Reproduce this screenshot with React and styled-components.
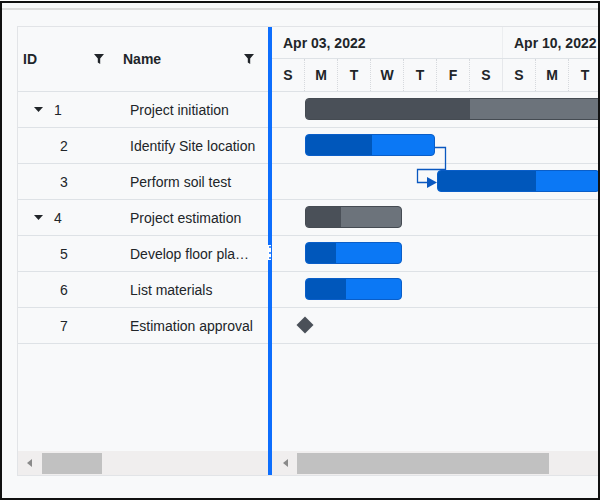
import styled, { createGlobalStyle } from "styled-components";

const GlobalStyle = createGlobalStyle`
  html, body {
    margin: 0;
    padding: 0;
    background: #ffffff;
  }
  body {
    font-family: "Liberation Sans", Arial, sans-serif;
    color: #212529;
  }
`;

const DAY = 33;
const BLUE = "#0b78f5";
const BLUE_DARK = "#0057bb";
const GRAY = "#6c737b";
const GRAY_DARK = "#4a5058";

const Frame = styled.div`
  box-sizing: border-box;
  width: 600px;
  height: 499px;
  margin-top: 1px;
  border: 2px solid #111;
  background: #f8f9fa;
  overflow: hidden;
`;

const TopBar = styled.div`
  box-sizing: border-box;
  height: 7px;
  border-bottom: 2px solid #dcdcdc;
`;

const Gantt = styled.div`
  box-sizing: border-box;
  display: flex;
  height: 450px;
  margin: 16px 0 0 15px;
  width: 620px;
  border-left: 1px solid #e2e4e7;
  border-top: 1px solid #e2e4e7;
  border-bottom: 1px solid #e2e4e7;
`;

const Pane = styled.div`
  display: flex;
  flex-direction: column;
  width: ${(p) => p.$width}px;
  flex: ${(p) => (p.$grow ? 1 : "none")};
  overflow: hidden;
`;

const Splitter = styled.div`
  position: relative;
  width: 4px;
  flex: none;
  background: #0d6efd;
`;

const Handle = styled.div`
  position: absolute;
  top: 218px;
  left: 0;
  width: 3px;
  height: 15px;
  background: #ffffff;
  display: flex;
  flex-direction: column;
  justify-content: space-between;
  align-items: center;
  padding: 1px 0;
  box-sizing: border-box;
  span {
    width: 2px;
    height: 2px;
    border-radius: 50%;
    background: #0d6efd;
  }
`;

const GridHeader = styled.div`
  box-sizing: border-box;
  display: flex;
  height: 65px;
  border-bottom: 1px solid #dee2e6;
`;

const HeadCell = styled.div`
  display: flex;
  align-items: center;
  justify-content: space-between;
  width: ${(p) => p.$width}px;
  padding: ${(p) => p.$pad};
  box-sizing: border-box;
  font-weight: 700;
  font-size: 14px;
`;

const Body = styled.div`
  position: relative;
  flex: 1;
`;

const Row = styled.div`
  box-sizing: border-box;
  display: flex;
  align-items: center;
  height: 36px;
  border-bottom: 1px solid #dee2e6;
  font-size: 14px;
`;

const IdCell = styled.div`
  display: flex;
  align-items: center;
  width: 95px;
  box-sizing: border-box;
  padding-left: ${(p) => (p.$parent ? 16 : 42)}px;
  gap: 11px;
`;

const NameCell = styled.div`
  width: 155px;
  box-sizing: border-box;
  padding: 0 12px 0 17px;
  white-space: nowrap;
  overflow: hidden;
  text-overflow: ellipsis;
`;

const Scroller = styled.div`
  box-sizing: border-box;
  display: flex;
  align-items: center;
  gap: ${(p) => p.$gap}px;
  height: 24px;
  padding-left: ${(p) => p.$pad}px;
  background: #f0eeee;
`;

const ArrowLeft = styled.div`
  width: 0;
  height: 0;
  border-top: 4px solid transparent;
  border-bottom: 4px solid transparent;
  border-right: 5px solid #8a8a8a;
  margin-left: 1px;
`;

const Thumb = styled.div`
  width: ${(p) => p.$width}px;
  height: 21px;
  background: #c1c1c1;
`;

const MonthRow = styled.div`
  box-sizing: border-box;
  display: flex;
  height: 32px;
  border-bottom: 1px solid #dee2e6;
`;

const Week = styled.div`
  box-sizing: border-box;
  flex: none;
  width: ${DAY * 7}px;
  padding-left: 11px;
  display: flex;
  align-items: center;
  font-weight: 700;
  font-size: 14px;
  border-right: 1px solid #eceef0;
  white-space: nowrap;
`;

const DayRow = styled.div`
  box-sizing: border-box;
  display: flex;
  height: 33px;
  border-bottom: 1px solid #dee2e6;
`;

const Day = styled.div`
  box-sizing: border-box;
  flex: none;
  width: ${DAY}px;
  display: flex;
  align-items: center;
  justify-content: center;
  font-weight: 700;
  font-size: 14px;
  border-right: 1px ${(p) => (p.$weekEnd ? "solid #e6e8eb" : "dotted #d6d9dd")};
`;

const ChartRow = styled(Row)`
  position: relative;
`;

const Bar = styled.div`
  position: absolute;
  top: 6px;
  box-sizing: border-box;
  height: 22px;
  border-radius: 4px;
  overflow: hidden;
  background: ${(p) => (p.$gray ? GRAY : BLUE)};
  border: 1px solid ${(p) => (p.$gray ? "#454b52" : "#0a5ec8")};
`;

const Progress = styled.div`
  height: 100%;
  background: ${(p) => (p.$gray ? GRAY_DARK : BLUE_DARK)};
`;

const Milestone = styled.div`
  position: absolute;
  top: 11px;
  width: 12px;
  height: 12px;
  background: ${GRAY_DARK};
  transform: rotate(45deg);
`;

const Connector = styled.svg`
  position: absolute;
  left: 0;
  top: 0;
  pointer-events: none;
`;

const FilterIcon = () => (
  <svg width="10" height="10" viewBox="0 0 10 10">
    <path d="M0 0 H10 L6.2 4.6 V10 L3.8 8.6 V4.6 Z" fill="#212529" />
  </svg>
);

const Caret = () => (
  <svg width="9" height="5" viewBox="0 0 9 5">
    <path d="M0 0 H9 L4.5 5 Z" fill="#212529" />
  </svg>
);

const tasks = [
  { id: 1, name: "Project initiation", parent: true, start: 1, days: 10, progress: 0.5, gray: true },
  { id: 2, name: "Identify Site location", start: 1, days: 4, progress: 0.51 },
  { id: 3, name: "Perform soil test", start: 5, days: 5, progress: 0.6 },
  { id: 4, name: "Project estimation", parent: true, start: 1, days: 3, progress: 0.36, gray: true },
  { id: 5, name: "Develop floor plan for estimation", start: 1, days: 3, progress: 0.31 },
  { id: 6, name: "List materials", start: 1, days: 3, progress: 0.41 },
  { id: 7, name: "Estimation approval", start: 1, milestone: true },
];

const days = ["S", "M", "T", "W", "T", "F", "S", "S", "M", "T", "W", "T", "F", "S"];

export default function App() {
  return (
    <>
      <GlobalStyle />
      <Frame>
        <TopBar />
        <Gantt>
          <Pane $width={250}>
            <GridHeader>
              <HeadCell $width={95} $pad="0 9px 0 5px">
                ID <FilterIcon />
              </HeadCell>
              <HeadCell $width={155} $pad="0 14px 0 10px">
                Name <FilterIcon />
              </HeadCell>
            </GridHeader>
            <Body>
              {tasks.map((t) => (
                <Row key={t.id}>
                  <IdCell $parent={t.parent}>
                    {t.parent && <Caret />}
                    {t.id}
                  </IdCell>
                  <NameCell>{t.name}</NameCell>
                </Row>
              ))}
            </Body>
            <Scroller $pad={8} $gap={10}>
              <ArrowLeft />
              <Thumb $width={60} />
            </Scroller>
          </Pane>
          <Splitter>
            <Handle>
              <span />
              <span />
              <span />
            </Handle>
          </Splitter>
          <Pane $grow>
            <MonthRow>
              <Week>Apr 03, 2022</Week>
              <Week>Apr 10, 2022</Week>
            </MonthRow>
            <DayRow>
              {days.map((d, i) => (
                <Day key={i} $weekEnd={i % 7 === 6}>
                  {d}
                </Day>
              ))}
            </DayRow>
            <Body>
              {tasks.map((t) => {
                const left = t.start * DAY;
                if (t.milestone) {
                  return (
                    <ChartRow key={t.id}>
                      <Milestone style={{ left: left - 6 }} />
                    </ChartRow>
                  );
                }
                const width = t.days * DAY - 2;
                return (
                  <ChartRow key={t.id}>
                    <Bar $gray={t.gray} style={{ left, width }}>
                      <Progress $gray={t.gray} style={{ width: Math.round(width * t.progress) }} />
                    </Bar>
                  </ChartRow>
                );
              })}
              <Connector width="200" height="120">
                <path
                  d="M163 55.5 H173.5 V77.5 H145.5 V90.5 H156"
                  fill="none"
                  stroke="#0a58c0"
                  strokeWidth="1.3"
                />
                <path d="M155 85 L165 90.5 L155 96 Z" fill="#0a58c0" />
              </Connector>
            </Body>
            <Scroller $pad={10} $gap={9}>
              <ArrowLeft />
              <Thumb $width={252} />
            </Scroller>
          </Pane>
        </Gantt>
      </Frame>
    </>
  );
}
